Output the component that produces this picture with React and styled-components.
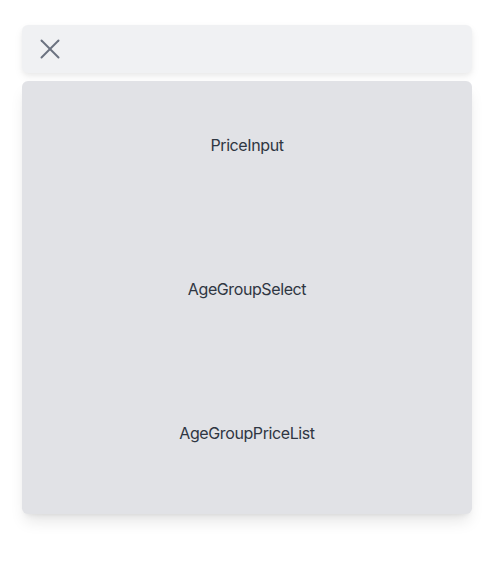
import React from "react"
import styled, { createGlobalStyle } from "styled-components"

const GlobalStyle = createGlobalStyle`
  body {
    margin: 0;
    background: #ffffff;
    font-family: Inter, "Noto Sans", sans-serif;
  }
`

const Page = styled.div`
  display: flex;
  flex-direction: column;
  gap: 8px;
  padding: 25px 22px;
  width: 450px;
`

const Header = styled.div`
  display: flex;
  align-items: center;
  height: 48px;
  padding: 0 18px;
  background: #f0f1f3;
  border-radius: 6px;
  box-shadow: 0 4px 10px rgba(0, 0, 0, 0.06), 0 2px 4px rgba(0, 0, 0, 0.04);
`

const CloseButton = styled.button`
  display: flex;
  align-items: center;
  justify-content: center;
  padding: 0;
  border: none;
  background: none;
  color: #6b7280;
  cursor: pointer;
`

const Panel = styled.div`
  display: flex;
  flex-direction: column;
  gap: 16px;
  padding-bottom: 17px;
  background: #e1e2e6;
  border-radius: 6px;
  box-shadow: 0 10px 15px -3px rgba(0, 0, 0, 0.1), 0 4px 6px -4px rgba(0, 0, 0, 0.1);
`

const Slot = styled.div`
  display: flex;
  align-items: center;
  justify-content: center;
  height: 128px;
  font-size: 16px;
  letter-spacing: -0.4px;
  color: #2f3642;
`

const CloseIcon = () => (
  <svg width="20" height="20" viewBox="0 0 20 20" fill="none" stroke="currentColor" strokeWidth="2" strokeLinecap="round">
    <line x1="1.5" y1="1.5" x2="18.5" y2="18.5" />
    <line x1="18.5" y1="1.5" x2="1.5" y2="18.5" />
  </svg>
)

const App = () => {
  return (
    <>
      <GlobalStyle />
      <Page>
        <Header>
          <CloseButton aria-label="Close">
            <CloseIcon />
          </CloseButton>
        </Header>
        <Panel>
          <Slot>PriceInput</Slot>
          <Slot>AgeGroupSelect</Slot>
          <Slot>AgeGroupPriceList</Slot>
        </Panel>
      </Page>
    </>
  )
}

export default App
